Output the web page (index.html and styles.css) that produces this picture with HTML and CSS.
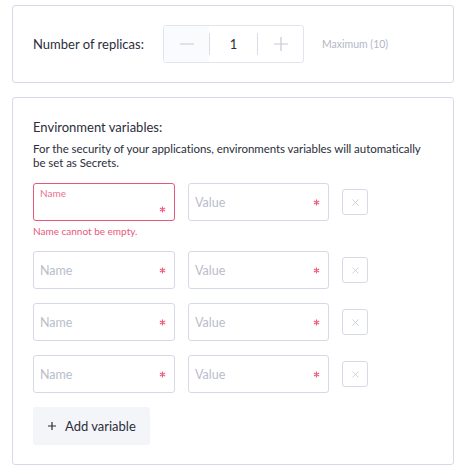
FILE: index.html
```html
<!DOCTYPE html>
<html>
<head>
<meta charset="utf-8">
<link rel="stylesheet" href="styles.css">
</head>
<body>
<div class="page">
  <section class="card replicas">
    <span class="label">Number of replicas:</span>
    <div class="stepper">
      <button class="step minus" disabled>
        <svg width="14" height="14" viewBox="0 0 14 14"><path d="M0 7h14" stroke="currentColor" stroke-width="1.2"/></svg>
      </button>
      <span class="sep"></span>
      <span class="count">1</span>
      <span class="sep"></span>
      <button class="step plus">
        <svg width="14" height="14" viewBox="0 0 14 14"><path d="M0 7h14M7 0v14" stroke="currentColor" stroke-width="1.2"/></svg>
      </button>
    </div>
    <span class="max">Maximum (10)</span>
  </section>

  <section class="card env">
    <h2 class="title">Environment variables:</h2>
    <p class="desc">For the security of your applications, environments variables will automatically be set as Secrets.</p>

    <div class="rows">
      <div class="row-wrap">
        <div class="row">
          <div class="field error">
            <span class="float">Name</span>
            <svg class="star" width="7" height="7" viewBox="0 0 8 8"><path d="M4 0.5v7M1 2.2l6 3.6M7 2.2l-6 3.6" stroke="currentColor" stroke-width="1.3"/></svg>
          </div>
          <div class="field">
            <span class="ph">Value</span>
            <svg class="star" width="7" height="7" viewBox="0 0 8 8"><path d="M4 0.5v7M1 2.2l6 3.6M7 2.2l-6 3.6" stroke="currentColor" stroke-width="1.3"/></svg>
          </div>
          <button class="remove"><svg width="7" height="7" viewBox="0 0 8 8"><path d="M0.5 0.5l7 7M7.5 0.5l-7 7" stroke="currentColor" stroke-width="0.9"/></svg></button>
        </div>
        <div class="err-msg">Name cannot be empty.</div>
      </div>
      <div class="row">
        <div class="field"><span class="ph">Name</span><svg class="star" width="7" height="7" viewBox="0 0 8 8"><path d="M4 0.5v7M1 2.2l6 3.6M7 2.2l-6 3.6" stroke="currentColor" stroke-width="1.3"/></svg></div>
        <div class="field"><span class="ph">Value</span><svg class="star" width="7" height="7" viewBox="0 0 8 8"><path d="M4 0.5v7M1 2.2l6 3.6M7 2.2l-6 3.6" stroke="currentColor" stroke-width="1.3"/></svg></div>
        <button class="remove"><svg width="7" height="7" viewBox="0 0 8 8"><path d="M0.5 0.5l7 7M7.5 0.5l-7 7" stroke="currentColor" stroke-width="0.9"/></svg></button>
      </div>
      <div class="row">
        <div class="field"><span class="ph">Name</span><svg class="star" width="7" height="7" viewBox="0 0 8 8"><path d="M4 0.5v7M1 2.2l6 3.6M7 2.2l-6 3.6" stroke="currentColor" stroke-width="1.3"/></svg></div>
        <div class="field"><span class="ph">Value</span><svg class="star" width="7" height="7" viewBox="0 0 8 8"><path d="M4 0.5v7M1 2.2l6 3.6M7 2.2l-6 3.6" stroke="currentColor" stroke-width="1.3"/></svg></div>
        <button class="remove"><svg width="7" height="7" viewBox="0 0 8 8"><path d="M0.5 0.5l7 7M7.5 0.5l-7 7" stroke="currentColor" stroke-width="0.9"/></svg></button>
      </div>
      <div class="row">
        <div class="field"><span class="ph">Name</span><svg class="star" width="7" height="7" viewBox="0 0 8 8"><path d="M4 0.5v7M1 2.2l6 3.6M7 2.2l-6 3.6" stroke="currentColor" stroke-width="1.3"/></svg></div>
        <div class="field"><span class="ph">Value</span><svg class="star" width="7" height="7" viewBox="0 0 8 8"><path d="M4 0.5v7M1 2.2l6 3.6M7 2.2l-6 3.6" stroke="currentColor" stroke-width="1.3"/></svg></div>
        <button class="remove"><svg width="7" height="7" viewBox="0 0 8 8"><path d="M0.5 0.5l7 7M7.5 0.5l-7 7" stroke="currentColor" stroke-width="0.9"/></svg></button>
      </div>
    </div>

    <button class="add">
      <svg width="8" height="8" viewBox="0 0 8 8"><path d="M0 4h8M4 0v8" stroke="currentColor" stroke-width="1.2"/></svg>
      <span>Add variable</span>
    </button>
  </section>
</div>
</body>
</html>
```

FILE: styles.css
```css
* { box-sizing: border-box; }
body {
  margin: 0;
  background: #fff;
  font-family: Lato, "Noto Sans", sans-serif;
  color: #2b2e3b;
}
.page {
  padding: 5px 14px 0 12px;
  display: flex;
  flex-direction: column;
  gap: 14px;
}
.card {
  border: 1px solid #d6dae7;
  border-radius: 3px;
  background: #fff;
}
.replicas {
  height: 78px;
  display: flex;
  align-items: center;
  padding-left: 20px;
}
.label {
  font-size: 13px;
  width: 130px;
}
.stepper {
  width: 141px;
  height: 38px;
  border: 1px solid #e2e5ee;
  border-radius: 3px;
  display: flex;
  align-items: center;
  overflow: hidden;
}
.step {
  border: 0;
  background: transparent;
  padding: 0;
  height: 100%;
  display: flex;
  align-items: center;
  justify-content: center;
  color: #c5c9d6;
}
.minus { width: 45px; background: #fafbfc; }
.plus { width: 45px; }
.sep {
  width: 1px;
  height: 22px;
  background: #d9dce6;
}
.count {
  flex: 1;
  text-align: center;
  font-size: 13px;
  color: #2b2e3b;
}
.max {
  margin-left: 18px;
  font-size: 10.5px;
  color: #b3b7c5;
}
.env {
  padding: 20px 20px 20px 20px;
  height: 368px;
}
.title {
  margin: 0;
  font-size: 13px;
  font-weight: 400;
  line-height: 18px;
}
.desc {
  margin: 6px 0 0;
  font-size: 11.5px;
  line-height: 14px;
  letter-spacing: -0.05px;
}
.rows {
  margin-top: 13px;
  display: flex;
  flex-direction: column;
  gap: 14px;
}
.row {
  display: flex;
  align-items: center;
  gap: 13px;
}
.field {
  position: relative;
  width: 142px;
  height: 38px;
  border: 1px solid #d6dae7;
  border-radius: 3px;
  display: flex;
  align-items: center;
  padding: 0 6px;
}
.field + .field { width: 141px; }
.ph {
  font-size: 12.5px;
  color: #b9bdcb;
}
.star {
  position: absolute;
  right: 8px;
  top: 15px;
  color: #ec5b7e;
}
.field.error {
  border-color: #e5587a;
}
.float {
  position: absolute;
  left: 6px;
  top: 3px;
  font-size: 10px;
  color: #ec6f8c;
}
.field.error .star { top: 22px; }
.err-msg {
  margin-top: 4px;
  font-size: 10px;
  color: #e8587a;
}
.remove {
  width: 26px;
  height: 26px;
  border: 1px solid #d6dae7;
  border-radius: 3px;
  background: #fff;
  color: #c5c9d6;
  display: flex;
  align-items: center;
  justify-content: center;
  padding: 0;
}
.add {
  margin-top: 14px;
  height: 38px;
  width: 117px;
  border: 0;
  border-radius: 3px;
  background: #f4f5f8;
  display: flex;
  align-items: center;
  gap: 9px;
  padding: 0 0 0 15px;
  font-family: inherit;
  font-size: 13px;
  color: #2b2e3b;
}
```
